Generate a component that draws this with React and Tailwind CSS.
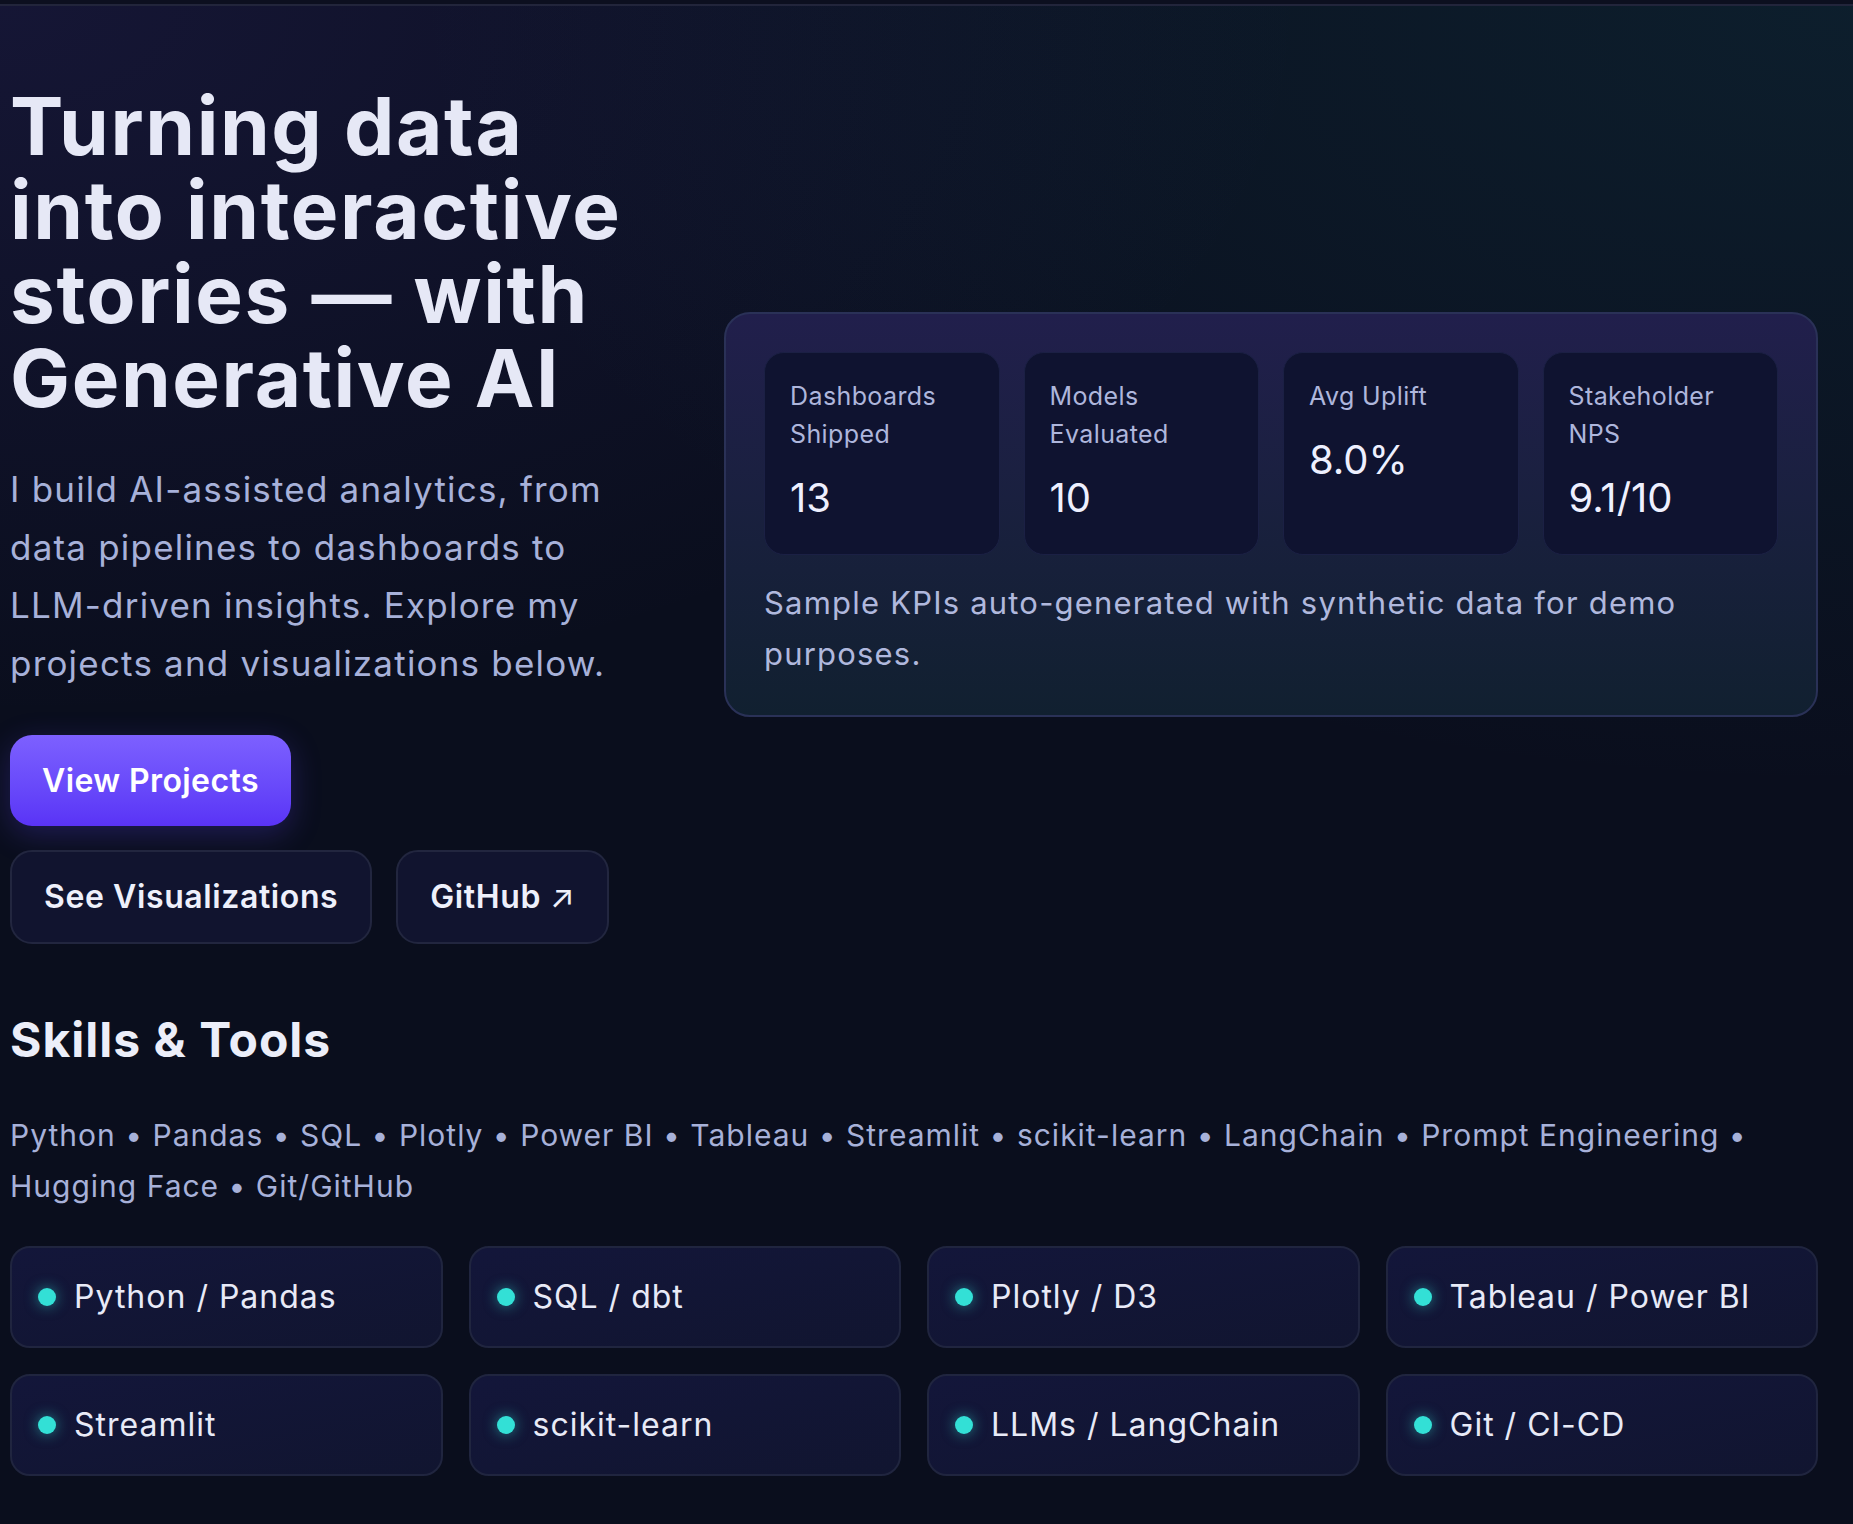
import React from "react";

const kpis = [
  { label: "Dashboards Shipped", value: "13" },
  { label: "Models Evaluated", value: "10" },
  { label: "Avg Uplift", value: "8.0%" },
  { label: "Stakeholder NPS", value: "9.1/10" },
];

const skills = [
  "Python", "Pandas", "SQL", "Plotly", "Power BI", "Tableau", "Streamlit",
  "scikit-learn", "LangChain", "Prompt Engineering", "Hugging Face", "Git/GitHub",
];

const chips = [
  "Python / Pandas", "SQL / dbt", "Plotly / D3", "Tableau / Power BI",
  "Streamlit", "scikit-learn", "LLMs / LangChain", "Git / CI-CD",
];

function KpiTile({ label, value }) {
  return (
    <div className="rounded-[20px] border border-[#1b2044] bg-[#0f1330] px-[25px] pt-[24px] pb-[24px]">
      <div className="text-[25px] leading-[38px] tracking-[0.4px] text-[#aeb6dc]">{label}</div>
      <div className="mt-[12px] text-[40px] leading-[65px] text-[#eef0ff]">{value}</div>
    </div>
  );
}

function Chip({ name }) {
  return (
    <div className="flex h-[102px] items-center gap-[18px] rounded-[20px] border-2 border-[#20253f] bg-gradient-to-br from-[#13163a] to-[#111530] pl-[26px]">
      <span className="h-[18px] w-[18px] shrink-0 rounded-full bg-[#33e0d6] shadow-[0_0_14px_rgba(51,224,214,0.55)]" />
      <span className="text-[32px] tracking-[1px] text-[#e8eaf7]">{name}</span>
    </div>
  );
}

const ghostBtn =
  "h-[94px] rounded-[22px] border-2 border-[#22263f] bg-[#11142f] px-[32px] text-[32px] font-semibold tracking-[0.6px] text-[#eef0fb]";

export default function App() {
  return (
    <div className="min-h-screen bg-[#0a0e1d] font-['Inter',sans-serif] text-[#e6e8f6]">
      <div className="h-[6px] border-b-2 border-[#22253b] bg-[#0c0f1f]" />

      <section className="bg-[radial-gradient(ellipse_at_0%_0%,rgba(90,70,200,0.14),transparent_50%),radial-gradient(ellipse_at_100%_0%,rgba(30,130,140,0.14),transparent_55%)] pb-[67px] pl-[10px] pr-[35px] pt-[78px]">
        <div className="grid grid-cols-[650px_1fr] items-center gap-[64px]">
          <div>
            <h1 className="text-[80px] font-bold leading-[84px] tracking-[1.6px] text-[#e6e8f6]">
              Turning data into interactive stories — with Generative AI
            </h1>
            <p className="mt-[40px] w-[620px] text-[35px] leading-[58px] tracking-[1.2px] text-[#a7b1d9]">
              I build AI-assisted analytics, from data pipelines to dashboards to LLM-driven insights. Explore my projects and visualizations below.
            </p>
            <div className="mt-[43px] flex flex-col items-start gap-[24px]">
              <button className="h-[91px] rounded-[22px] bg-gradient-to-b from-[#7d60ff] to-[#5a33f6] px-[32px] text-[32px] font-semibold tracking-[0.4px] text-white shadow-[0_8px_30px_rgba(100,70,255,0.25)]">
                View Projects
              </button>
              <div className="flex gap-[24px]">
                <button className={ghostBtn}>See Visualizations</button>
                <button className={ghostBtn + " px-[30px]"}>
                  GitHub <span className="font-normal">↗</span>
                </button>
              </div>
            </div>
          </div>

          <div className="rounded-[26px] border-2 border-[#2a3157] bg-gradient-to-b from-[#211f4c] to-[#112030] px-[38px] pt-[38px] pb-[36px]">
            <div className="grid grid-cols-4 gap-[24px]">
              {kpis.map((k) => (
                <KpiTile key={k.label} label={k.label} value={k.value} />
              ))}
            </div>
            <p className="mt-[22px] text-[31px] leading-[51px] tracking-[1.2px] text-[#b0b8dd]">
              Sample KPIs auto-generated with synthetic data for demo purposes.
            </p>
          </div>
        </div>
      </section>

      <section className="pb-[46px] pl-[10px] pr-[35px]">
        <h2 className="text-[48px] font-bold leading-[58px] tracking-[1px] text-[#eceef9]">Skills &amp; Tools</h2>
        <p className="mt-[41px] text-[30px] leading-[51px] tracking-[1px] text-[#a7b1d9]">
          {skills.join(" • ")}
        </p>
        <div className="mt-[34px] grid grid-cols-4 gap-[26px]">
          {chips.map((c) => (
            <Chip key={c} name={c} />
          ))}
        </div>
      </section>
    </div>
  );
}
